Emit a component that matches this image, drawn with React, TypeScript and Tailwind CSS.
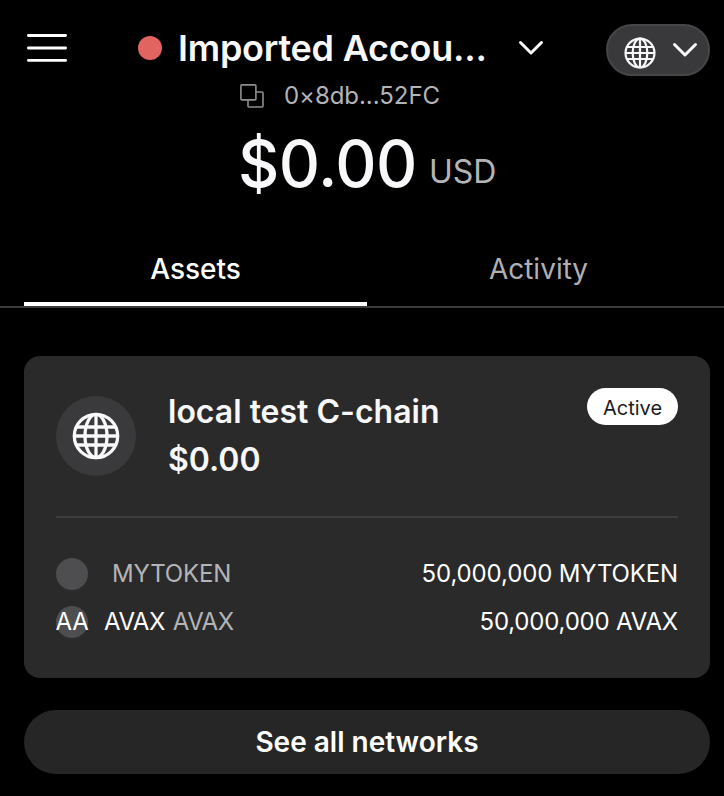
import React from "react";

function Globe({ size, stroke }: { size: number; stroke: number }) {
  return (
    <svg width={size} height={size} viewBox="0 0 48 48" fill="none" stroke="#f8f8fb" strokeWidth={stroke}>
      <circle cx="24" cy="24" r="21.7" />
      <ellipse cx="24" cy="24" rx="11" ry="21.7" />
      <path d="M24 2v44M2 24h44M4 15h40M4 33h40" />
    </svg>
  );
}

function Chevron({ className }: { className: string }) {
  return (
    <svg className={className} width="26" height="16" viewBox="0 0 26 16" fill="none" stroke="#f8f8fb" strokeWidth="3" strokeLinecap="round" strokeLinejoin="round">
      <path d="M2.5 2.5L13 13L23.5 2.5" />
    </svg>
  );
}

function Header() {
  return (
    <header className="flex h-[76px] items-start">
      <button className="mt-[33px] ml-[27px]" aria-label="Menu">
        <svg className="block" width="40" height="30" viewBox="0 0 40 30" stroke="white" strokeWidth="2.8" strokeLinecap="round">
          <path d="M1.4 2.5h37.2M1.4 15h37.2M1.4 27.4h37.2" />
        </svg>
      </button>
      <span className="mt-9 ml-[71px] size-6 rounded-full bg-[#e16461]" />
      <h1 className="mt-[26px] ml-4 w-[320px] text-[36px] leading-[44px] font-semibold tracking-[-0.25px] whitespace-nowrap text-[#f8f8fb]">Imported Accou...</h1>
      <Chevron className="mt-10 ml-[20px] shrink-0" />
      <button className="mt-6 mr-[14px] ml-auto flex h-[52px] w-[104px] items-center rounded-full border-2 border-[#464648] bg-[#39393b] pl-4" aria-label="Network">
        <span className="mt-[5px]"><Globe size={32} stroke={3.3} /></span>
        <Chevron className="ml-4" />
      </button>
    </header>
  );
}

export default function App() {
  return (
    <div className="h-[796px] w-[724px] overflow-hidden bg-black font-['Inter',sans-serif] text-white">
      <Header />
      <div className="flex h-10 items-center pl-[240px] text-[24px] text-[#b4b4b7]">
        <svg width="24" height="24" viewBox="0 0 24 24" fill="none" stroke="#8e8e90" strokeWidth="1.6" strokeLinejoin="round">
          <rect x="0.9" y="0.9" width="15" height="15" rx="1" />
          <path d="M16 8h6a1 1 0 0 1 1 1v13a1 1 0 0 1-1 1H9a1 1 0 0 1-1-1v-6" />
        </svg>
        <span className="ml-5 tracking-[-0.05px]">0×8db...52FC</span>
      </div>
      <div className="flex h-[96px] items-start pl-[238px]">
        <span className="w-[180px] text-[64px] leading-[96px] font-medium tracking-[-0.5px] text-[#f8f8fb]">$0.00</span>
        <span className="mt-8 ml-[11px] text-[32px] leading-[48px] text-[#b4b4b7]">USD</span>
      </div>
      <nav className="mt-4 flex h-20 border-b-2 border-[#3a3a3c] pl-6 text-[28px]">
        <div className="h-[78px] w-[343px] border-b-4 border-white pt-5 text-center font-medium">Assets</div>
        <div className="w-[343px] pt-5 text-center text-[#b0b0b3]">Activity</div>
      </nav>
      <section className="mt-12 ml-6 h-[322px] w-[686px] rounded-2xl bg-[#2a2a2a] px-8">
        <div className="flex h-[160px] items-start pt-8">
          <div className="mt-2 flex size-20 items-center justify-center rounded-full bg-[#3a3a3c]"><Globe size={48} stroke={3.3} /></div>
          <div className="ml-8 text-[32px] leading-[48px] font-semibold text-[#f8f8fb]"><div>local test C-chain</div><div>$0.00</div></div>
          <span className="ml-auto flex h-[37px] w-[91px] items-center justify-center rounded-full bg-white pt-0.5 text-[20px] text-[#1c1c1e]">Active</span>
        </div>
        <div className="mb-8 h-[2px] bg-[#3c3c3c]" />
        <div className="flex h-12 items-center text-[24px] tracking-[-0.14px]">
          <span className="size-8 rounded-full bg-[#4e4e50]" />
          <span className="ml-6 text-[#b4b4b7]">MYTOKEN</span>
          <span className="ml-auto">50,000,000 MYTOKEN</span>
        </div>
        <div className="flex h-12 items-center text-[24px] tracking-[-0.2px]">
          <span className="flex size-8 items-center justify-center rounded-full bg-[#4e4e50]">AA</span>
          <span className="ml-4 tracking-[-0.5px]">AVAX</span><span className="ml-2 tracking-[-0.5px] text-[#b4b4b7]">AVAX</span>
          <span className="ml-auto">50,000,000 AVAX</span>
        </div>
      </section>
      <button className="mt-8 ml-6 h-16 w-[686px] rounded-full bg-[#262626] text-[28px] font-semibold">See all networks</button>
    </div>
  );
}
